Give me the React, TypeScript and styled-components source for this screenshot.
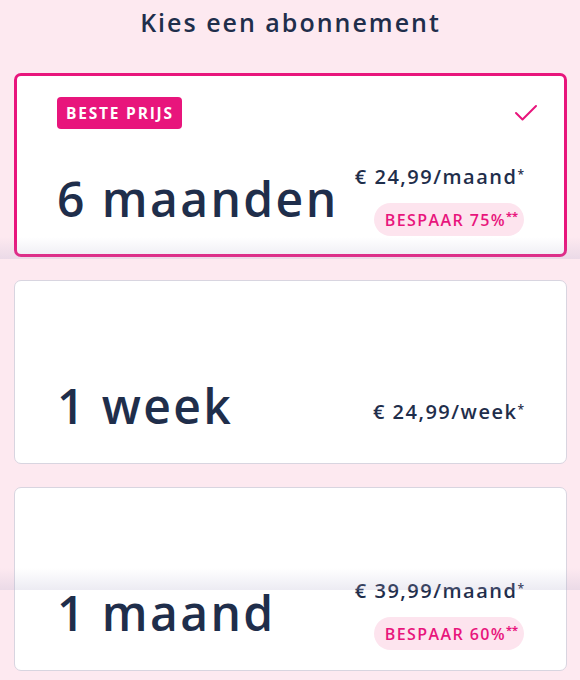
import React, { useState } from 'react';
import styled, { createGlobalStyle } from 'styled-components';

const pink = '#e8157c';
const navy = '#1f2e4b';

const GlobalStyle = createGlobalStyle`
  html, body {
    margin: 0;
    padding: 0;
    background: #fde9f0;
  }
  body {
    font-family: 'Open Sans', 'Noto Sans', sans-serif;
    color: ${navy};
  }
`;

interface Plan {
    id: string;
    title: string;
    price: string;
    saving?: string;
    best?: boolean;
}

const plans: Plan[] = [
    { id: '6m', title: '6 maanden', price: '€ 24,99/maand', saving: 'BESPAAR 75%', best: true },
    { id: '1w', title: '1 week', price: '€ 24,99/week' },
    { id: '1m', title: '1 maand', price: '€ 39,99/maand', saving: 'BESPAAR 60%' },
];

const Page = styled.div`
  position: relative;
  width: 580px;
  height: 680px;
  overflow: hidden;
  box-sizing: border-box;
  padding: 0 13px 0 14px;
`;

const Title = styled.h1`
  margin: 0;
  padding-top: 5px;
  height: 73px;
  box-sizing: border-box;
  text-align: center;
  font-size: 25px;
  font-weight: 600;
  line-height: 34px;
  color: ${navy};
  letter-spacing: 2px;
`;

const List = styled.div`
  display: flex;
  flex-direction: column;
  gap: 23px;
`;

const Card = styled.div<{ $selected: boolean }>`
  box-sizing: border-box;
  height: 184px;
  display: flex;
  flex-direction: column;
  background: #fff;
  border-radius: 7px;
  border: ${p => (p.$selected ? `3px solid ${pink}` : '1px solid #d8d5e0')};
  padding: ${p => (p.$selected ? '21px 40px 18px 40px' : '23px 42px 20px 42px')};
  cursor: pointer;
`;

const TopRow = styled.div`
  height: 32px;
  display: flex;
  align-items: center;
  justify-content: space-between;
`;

const Badge = styled.span`
  display: inline-flex;
  align-items: center;
  height: 32px;
  padding: 0 8px 0 9px;
  border-radius: 4px;
  background: ${pink};
  color: #fff;
  font-size: 15.5px;
  font-weight: 700;
  letter-spacing: 1.8px;
`;

const Check = styled.svg`
  width: 26px;
  height: 26px;
  margin-right: -15px;
`;

const BottomRow = styled.div`
  margin-top: auto;
  display: flex;
  align-items: flex-end;
  justify-content: space-between;
`;

const PlanName = styled.div`
  font-size: 48px;
  font-weight: 600;
  line-height: 52px;
  letter-spacing: 2.4px;
  color: ${navy};
  margin: 0 0 11px 0;
`;

const PriceCol = styled.div<{ $hasSaving: boolean }>`
  display: flex;
  flex-direction: column;
  align-items: flex-end;
  gap: 14px;
  padding-bottom: ${p => (p.$hasSaving ? '0' : '19px')};
`;

const Price = styled.div`
  font-size: 20px;
  font-weight: 600;
  line-height: 24px;
  letter-spacing: 1.5px;
  color: ${navy};
  sup {
    font-size: 12px;
    vertical-align: top;
    position: relative;
    top: -2px;
    letter-spacing: 0;
  }
`;

const Saving = styled.div`
  height: 33px;
  display: inline-flex;
  align-items: center;
  padding: 0 6px 0 11px;
  border-radius: 17px;
  background: #fde4ee;
  color: ${pink};
  font-size: 16px;
  font-weight: 600;
  letter-spacing: 1.4px;
  sup {
    font-size: 11px;
    font-weight: 700;
    vertical-align: top;
    position: relative;
    top: -4px;
    letter-spacing: 0;
  }
`;

const Shade = styled.div<{ $bottom: number }>`
  position: absolute;
  left: 0;
  right: 0;
  top: ${p => p.$bottom - 22}px;
  height: 22px;
  pointer-events: none;
  background: linear-gradient(to bottom, rgba(170, 165, 200, 0), rgba(170, 165, 200, 0.22));
`;

const App: React.FC = () => {
    const [selected, setSelected] = useState('6m');

    return (
        <>
            <GlobalStyle />
            <Page>
                <Title>Kies een abonnement</Title>
                <List>
                    {plans.map(plan => (
                        <Card key={plan.id} $selected={selected === plan.id} onClick={() => setSelected(plan.id)}>
                            <TopRow>
                                {plan.best ? <Badge>BESTE PRIJS</Badge> : <span />}
                                {selected === plan.id && (
                                    <Check viewBox="0 0 26 26" fill="none">
                                        <polyline points="3,13 9.5,19.5 23,6" stroke={pink} strokeWidth="2" strokeLinecap="round" strokeLinejoin="round" />
                                    </Check>
                                )}
                            </TopRow>
                            <BottomRow>
                                <PlanName>{plan.title}</PlanName>
                                <PriceCol $hasSaving={!!plan.saving}>
                                    <Price>{plan.price}<sup>*</sup></Price>
                                    {plan.saving && <Saving>{plan.saving}<sup>**</sup></Saving>}
                                </PriceCol>
                            </BottomRow>
                        </Card>
                    ))}
                </List>
                <Shade $bottom={259} />
                <Shade $bottom={590} />
            </Page>
        </>
    );
};

export default App;
